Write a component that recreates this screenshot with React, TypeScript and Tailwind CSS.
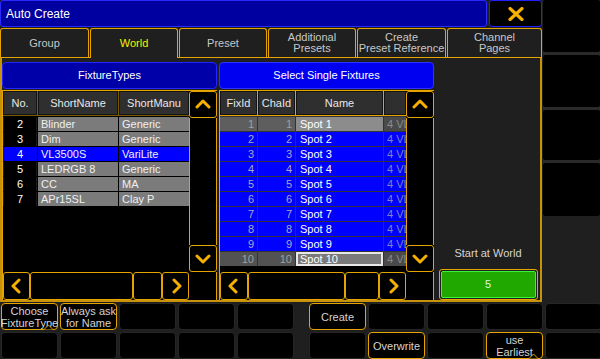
import React from "react";

const GOLD = "#e6a400";

type Dir = "up" | "down" | "left" | "right";

const Chevron = ({ dir }: { dir: Dir }) => {
  const points = {
    up: "2,10 8,4 14,10",
    down: "2,5 8,11 14,5",
    left: "10,2 4,8 10,14",
    right: "6,2 12,8 6,14",
  }[dir];
  return (
    <svg width="16" height="16" viewBox="0 0 16 16">
      <polyline
        points={points}
        fill="none"
        stroke="#f5b000"
        strokeWidth="3"
        strokeLinecap="round"
        strokeLinejoin="round"
      />
    </svg>
  );
};

const tabs = [
  { label: ["Group"], w: "w-[89px]", active: false },
  { label: ["World"], w: "w-[88px]", active: true },
  { label: ["Preset"], w: "w-[88px]", active: false },
  { label: ["Additional", "Presets"], w: "w-[88px]", active: false },
  { label: ["Create", "Preset Reference"], w: "w-[89px]", active: false },
  { label: ["Channel", "Pages"], w: "w-[95px]", active: false },
];

const fixtureTypes = [
  { no: "2", name: "Blinder", manu: "Generic" },
  { no: "3", name: "Dim", manu: "Generic" },
  { no: "4", name: "VL3500S", manu: "VariLite", selected: true },
  { no: "5", name: "LEDRGB 8", manu: "Generic" },
  { no: "6", name: "CC", manu: "MA" },
  { no: "7", name: "APr15SL", manu: "Clay P" },
];

const fixtures = Array.from({ length: 10 }, (_, i) => i + 1);

const ScrollColumn = () => (
  <div className="w-[28px] flex flex-col bg-black">
    <div className="h-[27px] border border-[#e6a400] rounded-[3px] flex items-center justify-center">
      <Chevron dir="up" />
    </div>
    <div className="flex-1 border-x border-[#e6a400]" />
    <div className="h-[27px] border border-[#e6a400] rounded-[3px] flex items-center justify-center">
      <Chevron dir="down" />
    </div>
  </div>
);

const HBar = ({ widths }: { widths: number[] }) => (
  <div className="h-[28px] flex bg-black">
    <div
      className="border border-[#e6a400] rounded-[3px] flex items-center justify-center"
      style={{ width: widths[0] }}
    >
      <Chevron dir="left" />
    </div>
    <div className="border border-[#e6a400] rounded-[3px]" style={{ width: widths[1] }} />
    <div className="border border-[#e6a400] rounded-[3px]" style={{ width: widths[2] }} />
    <div
      className="border border-[#e6a400] rounded-[3px] flex items-center justify-center"
      style={{ width: widths[3] }}
    >
      <Chevron dir="right" />
    </div>
    <div className="w-[28px] border-r border-[#e6a400]" />
  </div>
);

const HeadCell = ({ w, children }: { w: string; children?: React.ReactNode }) => (
  <div
    className={`${w} h-full bg-[#2f2f2f] border border-[#141414] flex items-center justify-center text-[#e8e8e8]`}
  >
    {children}
  </div>
);

const Notch = () => (
  <svg
    className="absolute right-[4px] bottom-[-1px]"
    width="9"
    height="6"
    viewBox="0 0 9 6"
  >
    <polyline points="0,5.5 4.5,1 9,5.5" fill="#000" stroke={GOLD} strokeWidth="1" />
  </svg>
);

type Cell = { lines?: string[]; notch?: boolean } | null;

const BottomCell = ({ lines, notch }: { lines?: string[]; notch?: boolean }) => (
  <div
    className={`relative w-[57px] h-[27px] bg-black rounded-[4px] border flex flex-col items-center justify-center leading-[12px] text-[#d4d4d4] ${
      lines ? "border-[#e6a400]" : "border-[#262626]"
    }`}
  >
    {lines?.map((l) => (
      <span key={l} className="whitespace-nowrap">
        {l}
      </span>
    ))}
    {notch && <Notch />}
  </div>
);

export default function App() {
  const bottomRow1: Cell[] = [
    { lines: ["Choose", "FixtureType"], notch: true },
    { lines: ["Always ask", "for Name"] },
    null,
    null,
    null,
    { lines: ["Create"] },
    null,
    null,
    null,
    null,
  ];
  const bottomRow2: Cell[] = [
    null,
    null,
    null,
    null,
    null,
    null,
    { lines: ["Overwrite"] },
    null,
    { lines: ["use", "Earliest"], notch: true },
    null,
  ];

  const renderBottomRow = (row: Cell[]) => (
    <div className="flex h-[27px] pl-px">
      <div className="flex gap-[2px]">
        {row.slice(0, 5).map((c, i) => (
          <BottomCell key={i} lines={c?.lines} notch={c?.notch} />
        ))}
      </div>
      <div className="flex gap-[2px] ml-[15px]">
        {row.slice(5).map((c, i) => (
          <BottomCell key={i} lines={c?.lines} notch={c?.notch} />
        ))}
      </div>
    </div>
  );

  return (
    <div className="w-[600px] h-[359px] overflow-hidden bg-[#1f1f1f] font-['Liberation_Sans',sans-serif] text-[11px] leading-none text-[#d8d8d8] flex flex-col">
      <div className="flex h-[302px]">
        {/* main window */}
        <div className="w-[542px] flex flex-col">
          <div className="flex h-[28px] gap-[2px] pb-px">
            <div className="flex-1 bg-[#0000a0] border border-[#2a2aff] rounded-[3px] flex items-center pl-[5px] text-white text-[12px]">
              Auto Create
            </div>
            <div className="w-[53px] bg-black border border-[#2020ff] rounded-[3px] flex items-center justify-center">
              <svg width="16" height="14" viewBox="0 0 16 14">
                <path
                  d="M2 1.5 L14 12.5 M14 1.5 L2 12.5"
                  stroke="#f5b000"
                  strokeWidth="3.2"
                  strokeLinecap="round"
                />
              </svg>
            </div>
          </div>

          {/* tabs */}
          <div className="flex h-[30px] gap-px border-b border-[#e6a400]">
            {tabs.map((t) => (
              <div
                key={t.label.join(" ")}
                className={`${t.w} shrink-0 border-x border-t border-[#e6a400] rounded-t-[3px] bg-[#1f1f1f] flex flex-col items-center justify-center leading-[11px] ${
                  t.active ? "text-[#f4f400] -mb-px" : "text-[#c8c8c8]"
                }`}
              >
                {t.label.map((l) => (
                  <span key={l} className="whitespace-nowrap">
                    {l}
                  </span>
                ))}
              </div>
            ))}
          </div>

          {/* body */}
          <div className="flex-1 border-x-2 border-b-2 border-[#c8920a] flex gap-[2px] pt-[4px]">
            {/* FixtureTypes panel */}
            <div className="w-[215px] flex flex-col gap-px">
              <div className="h-[27px] bg-[#0000a8] border border-[#2424ff] rounded-[4px] flex items-center justify-center text-white">
                FixtureTypes
              </div>
              <div className="h-[210px] flex flex-col border-t border-l border-[#e6a400] bg-black">
                <div className="h-[181px] flex">
                  <div className="flex-1 flex flex-col">
                    <div className="h-[25px] flex gap-px pb-px bg-[#7a5a00]">
                      <HeadCell w="w-[34px]">No.</HeadCell>
                      <HeadCell w="w-[80px]">ShortName</HeadCell>
                      <HeadCell w="w-[70px]">ShortManu</HeadCell>
                    </div>
                    <div className="flex flex-col gap-px pt-px">
                      {fixtureTypes.map((f) => (
                        <div key={f.no} className="h-[14px] flex gap-px leading-[14px]">
                          <div
                            className={`w-[34px] text-center text-white ${
                              f.selected ? "bg-[#0000ff]" : "bg-black border-x border-[#1c1c1c]"
                            }`}
                          >
                            {f.no}
                          </div>
                          <div
                            className={`w-[80px] pl-[3px] text-[#f0f0f0] ${
                              f.selected ? "bg-[#0000ff]" : "bg-[#7b7b7b]"
                            }`}
                          >
                            {f.name}
                          </div>
                          <div
                            className={`w-[70px] pl-[3px] text-[#f0f0f0] ${
                              f.selected ? "bg-[#0000ff]" : "bg-[#7b7b7b]"
                            }`}
                          >
                            {f.manu}
                          </div>
                        </div>
                      ))}
                    </div>
                  </div>
                  <ScrollColumn />
                </div>
                <HBar widths={[27, 103, 29, 27]} />
              </div>
            </div>

            {/* Select Single Fixtures panel */}
            <div className="w-[215px] flex flex-col gap-px">
              <div className="h-[27px] bg-[#0000f0] border border-[#3030ff] rounded-[4px] flex items-center justify-center text-white">
                Select Single Fixtures
              </div>
              <div className="h-[210px] flex flex-col border-t border-l border-[#e6a400] bg-black">
                <div className="h-[181px] flex">
                  <div className="flex-1 flex flex-col">
                    <div className="h-[25px] flex gap-px pb-px bg-[#e6a400]">
                      <HeadCell w="w-[37px]">FixId</HeadCell>
                      <HeadCell w="w-[37px]">ChaId</HeadCell>
                      <HeadCell w="w-[87px]">Name</HeadCell>
                      <HeadCell w="w-[22px]" />
                    </div>
                    <div className="flex flex-col gap-px pt-px bg-[#333333]">
                      {fixtures.map((n) => {
                        const first = n === 1;
                        const last = n === 10;
                        const grey = first || last;
                        const idBg = grey ? (first ? "bg-[#5e5e5e]" : "bg-[#525252]") : "bg-[#0000ff]";
                        const idText = grey ? "text-[#a0a0a0]" : "text-[#a8a8c8]";
                        return (
                          <div key={n} className="h-[14px] flex gap-px leading-[14px]">
                            <div className={`w-[37px] text-right pr-[3px] ${idBg} ${idText}`}>{n}</div>
                            <div className={`w-[37px] text-right pr-[3px] ${idBg} ${idText}`}>{n}</div>
                            {last ? (
                              <div className="w-[87px] border-2 border-[#e8e8e8] bg-[#7a7a7a] text-white pl-[2px] leading-[10px] whitespace-nowrap">
                                Spot {n}
                              </div>
                            ) : (
                              <div
                                className={`w-[87px] pl-[4px] text-white whitespace-nowrap ${
                                  first ? "bg-[#8c8c8c]" : "bg-[#0000ff]"
                                }`}
                              >
                                Spot {n}
                              </div>
                            )}
                            <div
                              className={`w-[22px] pl-[3px] overflow-hidden whitespace-nowrap ${
                                grey ? "bg-[#4a4a4a] text-[#8a8a8a]" : "bg-[#0000ff] text-[#8080c8]"
                              }`}
                            >
                              4 VL
                            </div>
                          </div>
                        );
                      })}
                    </div>
                  </div>
                  <ScrollColumn />
                </div>
                <HBar widths={[28, 97, 34, 27]} />
              </div>
            </div>

            {/* start at world */}
            <div className="flex-1 flex flex-col items-center justify-end">
              <div className="text-[#d4d4d4] mb-[10px]">Start at World</div>
              <div className="w-[99px] h-[31px] border border-[#e6a400] rounded-[3px] p-px">
                <div className="h-full border border-[#3cf03c] rounded-[2px] bg-[#20a800] flex items-center justify-center text-[#e0f8e0]">
                  5
                </div>
              </div>
            </div>
          </div>
        </div>

        {/* right column */}
        <div className="flex-1 ml-px flex flex-col">
          <div className="h-[216px] flex flex-col gap-[3px] bg-[#2a2a2a]">
            <div className="h-[52px] bg-black rounded-[2px]" />
            <div className="h-[52px] bg-black rounded-[2px]" />
            <div className="h-[50px] bg-black rounded-[2px]" />
            <div className="h-[53px] bg-black rounded-[2px]" />
          </div>
        </div>
      </div>

      {/* bottom buttons */}
      <div className="flex flex-col gap-[2px] pt-px">
        {renderBottomRow(bottomRow1)}
        {renderBottomRow(bottomRow2)}
      </div>
    </div>
  );
}
